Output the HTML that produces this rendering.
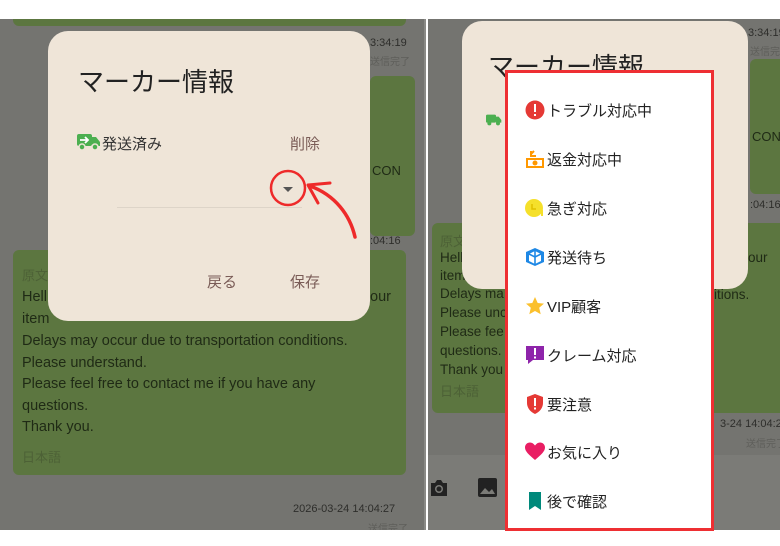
<!DOCTYPE html>
<html><head><meta charset="utf-8"><style>
*{margin:0;padding:0;box-sizing:border-box}
body{width:780px;height:546px;background:#fff;position:relative;overflow:hidden;font-family:"Liberation Sans","Noto Sans CJK JP",sans-serif}
.abs{position:absolute}
.panel{position:absolute;top:19px;height:511px;background:#747470;overflow:hidden}
.bub{position:absolute;background:#5c7640;border-radius:6px}
.ts{position:absolute;font-size:11px;color:#2e2e2b;white-space:nowrap}
.ts2{position:absolute;font-size:10px;color:#5e5e5a;white-space:nowrap}
.dlg{position:absolute;background:#efe5d8;border-radius:20px}
.msg{position:absolute;font-size:14.5px;line-height:21.5px;color:#1f2a15;white-space:nowrap}
.item{position:absolute;left:17px;height:24px;font-size:15px;color:#222;display:flex;align-items:center;white-space:nowrap}
.item svg{width:20px;height:20px;margin-right:2px;flex:none}
</style></head><body>
<!-- LEFT PANEL -->
<div class="panel" style="left:0;width:426px">
  <div class="bub" style="left:13px;top:-10px;width:393px;height:17px"></div>
  <div class="ts" style="left:370px;top:18px">3:34:19</div>
  <div class="ts2" style="left:370px;top:34px">送信完了</div>
  <div class="bub" style="left:370px;top:57px;width:45px;height:160px"></div>
  <div class="ts" style="left:372px;top:144px;font-size:13px;color:#1f2a15">CON</div>
  <div class="ts" style="left:370px;top:216px">:04:16</div>
  <div class="bub" style="left:13px;top:231px;width:393px;height:225px"></div>
  <div class="msg" style="left:22px;top:246px;color:#4d6136;font-size:13px">原文</div>
  <div class="msg" style="left:22px;top:268px">Hell</div><div class="msg" style="left:370px;top:268px">our</div>
  <div class="msg" style="left:22px;top:290px">item</div>
  <div class="msg" style="left:22px;top:312px">Delays may occur due to transportation conditions.<br>Please understand.<br>Please feel free to contact me if you have any<br>questions.<br>Thank you.</div>
  <div class="msg" style="left:22px;top:428px;color:#4d6136;font-size:13px">日本語</div>
  <div class="ts" style="left:293px;top:484px">2026-03-24 14:04:27</div>
  <div class="ts2" style="left:368px;top:501px">送信完了</div>
  <div style="position:absolute;left:424px;top:0;width:2px;height:511px;background:#8a8a86"></div>
  <div class="dlg" style="left:48px;top:12px;width:322px;height:290px">
    <div class="abs" style="left:30px;top:31px;font-size:26px;color:#222">マーカー情報</div>
    <svg class="abs" style="left:29px;top:102px" width="24" height="18" viewBox="0 0 24 18"><rect x="0" y="1" width="15" height="12" rx="2" fill="#4caf50"/><path d="M15 4h4l4 5v4h-8z" fill="#4caf50"/><circle cx="5" cy="14" r="3" fill="#4caf50" stroke="#efe5d8" stroke-width="1.5"/><circle cx="18" cy="14" r="3" fill="#4caf50" stroke="#efe5d8" stroke-width="1.5"/><path d="M3 7h8M8 4l3 3-3 3" stroke="#fff" stroke-width="1.8" fill="none"/></svg>
    <div class="abs" style="left:54px;top:102px;font-size:15px;color:#333">発送済み</div>
    <div class="abs" style="left:242px;top:102px;font-size:15px;color:#7a5c57">削除</div>
    <div class="abs" style="left:69px;top:176px;width:185px;height:1px;background:#ddd4c8"></div>
    <div class="abs" style="left:235px;top:156px;width:0;height:0;border-left:5px solid transparent;border-right:5px solid transparent;border-top:5px solid #555"></div>
    <div class="abs" style="left:159px;top:240px;font-size:15px;color:#7a5c57">戻る</div>
    <div class="abs" style="left:242px;top:240px;font-size:15px;color:#7a5c57">保存</div>
  </div>
</div>
<svg class="abs" style="left:260px;top:160px" width="110" height="90" viewBox="260 160 110 90">
  <circle cx="288" cy="188" r="17" fill="none" stroke="#ee2a2a" stroke-width="2.5"/>
  <path d="M355 237 C350 215 335 195 310 186" fill="none" stroke="#ee2a2a" stroke-width="3.5" stroke-linecap="round"/>
  <path d="M330 183 L308 185 L318 203" fill="none" stroke="#ee2a2a" stroke-width="3" stroke-linecap="round" stroke-linejoin="round"/>
</svg>
<!-- RIGHT PANEL -->
<div class="panel" style="left:428px;width:352px">
  <div class="ts" style="left:320px;top:8px">3:34:19</div>
  <div class="ts2" style="left:322px;top:24px">送信完了</div>
  <div class="bub" style="left:322px;top:40px;width:40px;height:135px"></div>
  <div class="ts" style="left:324px;top:110px;font-size:13px;color:#1f2a15">CON</div>
  <div class="ts" style="left:322px;top:180px">:04:16</div>
  <div class="bub" style="left:4px;top:204px;width:356px;height:190px"></div>
  <div class="msg" style="left:12px;top:212px;color:#4d6136;font-size:13px">原文</div>
  <div class="msg" style="left:12px;top:228px;font-size:13.5px">Hell</div><div class="msg" style="left:320px;top:228px;font-size:13.5px">our</div>
  <div class="msg" style="left:12px;top:246px;font-size:13.5px">item</div>
  <div class="msg" style="left:12px;top:265px;line-height:19px;font-size:13.5px">Delays ma<br>Please unc<br>Please fee<br>questions.<br>Thank you</div>
  <div class="msg" style="left:286px;top:265px;font-size:13.5px">itions.</div>
  <div class="msg" style="left:12px;top:362px;color:#4d6136;font-size:13px">日本語</div>
  <div class="ts" style="left:292px;top:399px">3-24 14:04:27</div>
  <div class="ts2" style="left:318px;top:416px">送信完了</div>
  <div class="abs" style="left:0;top:436px;width:352px;height:75px;background:#7b7b77"></div>
  <svg class="abs" style="left:1px;top:460px" width="20" height="18" viewBox="0 0 20 18"><path d="M2 4h4l2-3h4l2 3h4v13H2z" fill="#222"/><circle cx="10" cy="10" r="4" fill="#7b7b77"/><circle cx="10" cy="10" r="2.5" fill="#222"/></svg>
  <svg class="abs" style="left:50px;top:459px" width="19" height="19" viewBox="0 0 19 19"><rect width="19" height="19" rx="2" fill="#222"/><path d="M2 16l5-6 4 4 3-3 3 5z" fill="#7b7b77"/></svg>
  <div class="dlg" style="left:34px;top:2px;width:286px;height:268px">
    <div class="abs" style="left:26px;top:26px;font-size:26px;color:#222">マーカー情報</div>
    <svg class="abs" style="left:24px;top:92px" width="16" height="14" viewBox="0 0 24 18"><rect x="0" y="1" width="15" height="12" rx="2" fill="#4caf50"/><path d="M15 4h4l4 5v4h-8z" fill="#4caf50"/><circle cx="5" cy="14" r="3" fill="#4caf50"/><circle cx="18" cy="14" r="3" fill="#4caf50"/></svg>
  </div>
</div>
<!-- MENU -->
<div class="abs" style="left:505px;top:70px;width:209px;height:461px;background:#fff;border:3px solid #ee2f33">
  <div class="item" style="top:25px"><svg viewBox="0 0 20 20"><circle cx="10" cy="10" r="9.5" fill="#e53935"/><rect x="9" y="4" width="2" height="8" fill="#fff"/><rect x="9" y="14" width="2" height="2" fill="#fff"/></svg>トラブル対応中</div>
  <div class="item" style="top:74px"><svg viewBox="0 0 20 20"><rect x="1" y="9" width="18" height="10" fill="#ff9800"/><rect x="3" y="11" width="14" height="6" fill="#fff"/><circle cx="10" cy="14" r="2.5" fill="#ff9800"/><path d="M6 2v5h5M6 5l3-3" stroke="#ff9800" stroke-width="2" fill="none"/></svg>返金対応中</div>
  <div class="item" style="top:123px"><svg viewBox="0 0 20 20"><circle cx="9" cy="10" r="9" fill="#f5e02b"/><path d="M7 6v5h4" stroke="#e0c000" stroke-width="1.5" fill="none"/><rect x="16" y="12" width="2" height="6" fill="#f5e02b"/></svg>急ぎ対応</div>
  <div class="item" style="top:172px"><svg viewBox="0 0 20 20"><path d="M10 1l9 4v10l-9 4-9-4V5z" fill="#1e88e5"/><path d="M10 4l6 3v7l-6 3-6-3V7z" fill="#fff"/><path d="M10 4v13M4 7l6 3 6-3" stroke="#1e88e5" stroke-width="1.6" fill="none"/></svg>発送待ち</div>
  <div class="item" style="top:221px"><svg viewBox="0 0 20 20"><path d="M10 1l2.7 6 6.3.6-4.8 4.2 1.5 6.4L10 15l-5.7 3.2 1.5-6.4L1 7.6 7.3 7z" fill="#fbc02d"/></svg>VIP顧客</div>
  <div class="item" style="top:270px"><svg viewBox="0 0 20 20"><path d="M1 1h18v14H8l-5 4v-4H1z" fill="#8e24aa"/><rect x="9" y="3" width="2" height="7" fill="#fff"/><rect x="9" y="11.5" width="2" height="2" fill="#fff"/></svg>クレーム対応</div>
  <div class="item" style="top:319px"><svg viewBox="0 0 20 20"><path d="M10 0l8 3v6c0 5-3.5 9-8 11-4.5-2-8-6-8-11V3z" fill="#e53935"/><rect x="9" y="4" width="2" height="8" fill="#fff"/><rect x="9" y="13.5" width="2" height="2" fill="#fff"/></svg>要注意</div>
  <div class="item" style="top:367px"><svg viewBox="0 0 20 20"><path d="M10 18C3 12 0 9 0 5.5 0 2.5 2.3.5 5 .5c2 0 3.5 1 5 3 1.5-2 3-3 5-3 2.7 0 5 2 5 5C20 9 17 12 10 18z" fill="#e91e63"/></svg>お気に入り</div>
  <div class="item" style="top:416px"><svg viewBox="0 0 20 20"><path d="M4 1h12v18l-6-4-6 4z" fill="#00897b"/></svg>後で確認</div>
</div>
</body></html>
